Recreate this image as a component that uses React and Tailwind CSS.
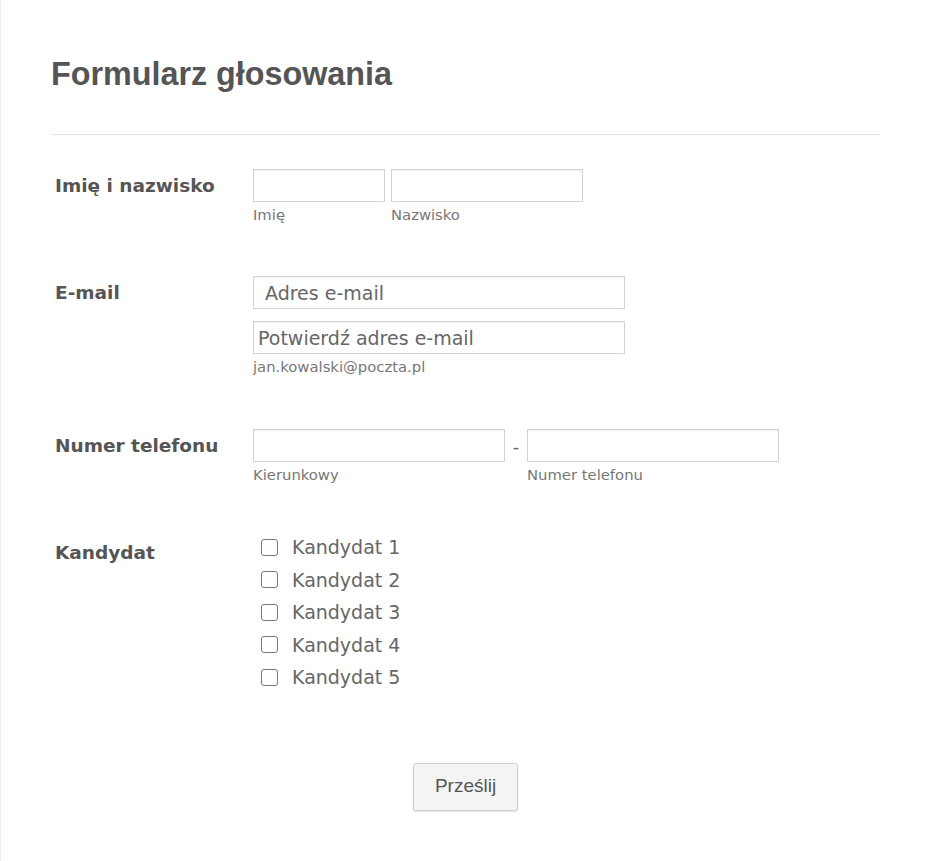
import React from "react";

const candidates = ["Kandydat 1", "Kandydat 2", "Kandydat 3", "Kandydat 4", "Kandydat 5"];

function Label({ children, className = "" }) {
  return (
    <div
      className={
        "w-[202px] shrink-0 pl-[4px] h-[33px] leading-[33px] text-[18.5px] font-bold text-[#555] font-['DejaVu_Sans',sans-serif] " +
        className
      }
    >
      {children}
    </div>
  );
}

function Field({ width, placeholder = "", className = "" }) {
  return (
    <input
      type="text"
      placeholder={placeholder}
      className={
        "h-[33px] border border-[#d3d3d3] bg-white text-[19px] text-[#555] placeholder:text-[#666] outline-none font-['DejaVu_Sans',sans-serif] shadow-[inset_0_1px_2px_rgba(0,0,0,0.06)] " +
        width +
        " " +
        className
      }
    />
  );
}

function Sub({ children }) {
  return (
    <div className="mt-[5px] h-[16px] leading-[16px] text-[14.8px] text-[#777] font-['DejaVu_Sans',sans-serif]">
      {children}
    </div>
  );
}

export default function App() {
  return (
    <div className="min-h-[861px] bg-white border-l border-[#ececec]">
      <div className="pl-[50px] pr-[50px] pt-[54px] pb-[50px]">
        {/* Header */}
        <h1 className="h-[40px] leading-[40px] text-[32.3px] font-bold text-[#555] font-['Liberation_Sans',Arial,sans-serif]">
          Formularz głosowania
        </h1>
        <div className="mt-[40px] border-t border-[#e3e3e3]" />

        {/* Name */}
        <div className="mt-[34px] flex">
          <Label>Imię i nazwisko</Label>
          <div className="flex gap-[6px]">
            <div>
              <Field width="w-[132px]" className="px-2" />
              <Sub>Imię</Sub>
            </div>
            <div>
              <Field width="w-[192px]" className="px-2" />
              <Sub>Nazwisko</Sub>
            </div>
          </div>
        </div>

        {/* Email */}
        <div className="mt-[53px] flex">
          <Label>E-mail</Label>
          <div>
            <Field width="w-[372px]" placeholder="Adres e-mail" className="pl-[11px]" />
            <Field width="w-[372px]" placeholder="Potwierdź adres e-mail" className="mt-[12px] block pl-[4px]" />
            <Sub>jan.kowalski@poczta.pl</Sub>
          </div>
        </div>

        {/* Phone */}
        <div className="mt-[54px] flex">
          <Label>Numer telefonu</Label>
          <div className="flex">
            <div>
              <Field width="w-[252px]" className="px-2" />
              <Sub>Kierunkowy</Sub>
            </div>
            <div className="w-[22px] text-center leading-[36px] text-[18px] text-[#666] font-['DejaVu_Sans',sans-serif]">
              -
            </div>
            <div>
              <Field width="w-[252px]" className="px-2" />
              <Sub>Numer telefonu</Sub>
            </div>
          </div>
        </div>

        {/* Candidates */}
        <div className="mt-[48px] flex">
          <Label className="mt-[5px]">Kandydat</Label>
          <div className="pl-[8px]">
            {candidates.map((c) => (
              <label
                key={c}
                className="flex items-center h-[32.5px] gap-[14px] text-[19px] text-[#666] font-['DejaVu_Sans',sans-serif] cursor-pointer"
              >
                <span className="w-[17px] h-[17px] rounded-[3px] border border-[#777] bg-white" />
                {c}
              </label>
            ))}
          </div>
        </div>

        {/* Submit */}
        <div className="mt-[69px] flex justify-center">
          <button className="w-[105px] h-[48px] rounded-[3px] border border-[#cfcfcf] bg-[#f4f4f4] text-[19px] text-[#555] font-['Liberation_Sans',Arial,sans-serif] shadow-[0_1px_2px_rgba(0,0,0,0.12)]">
            Prześlij
          </button>
        </div>
      </div>
    </div>
  );
}
